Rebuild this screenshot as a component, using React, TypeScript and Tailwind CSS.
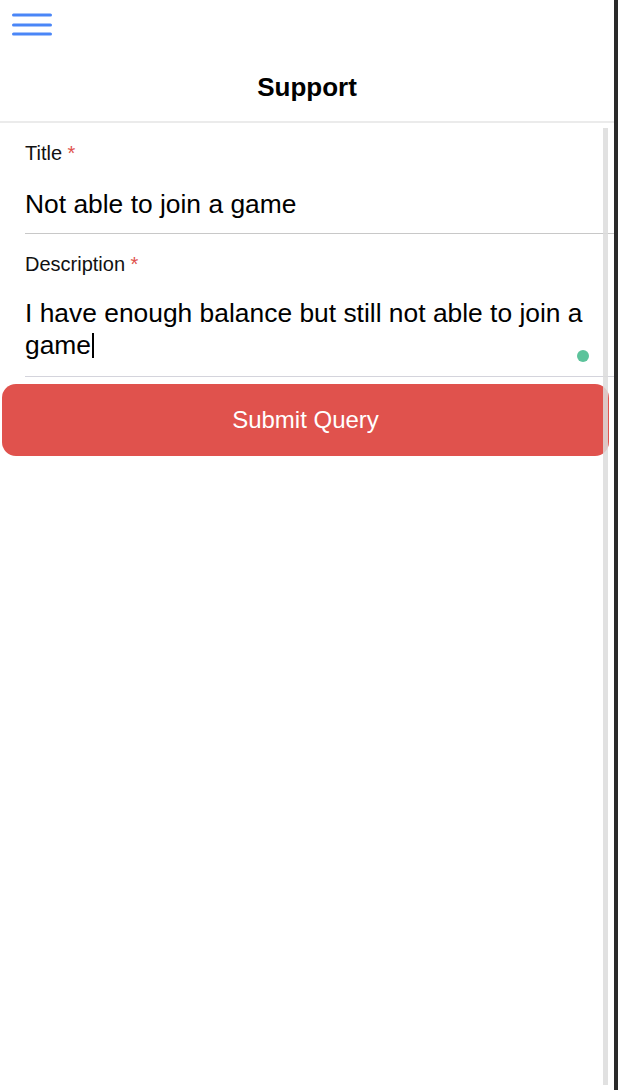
import React from 'react';

export default function App() {
  return (
    <div className="flex h-[1090px] w-[618px] bg-white font-['Liberation_Sans',Arial,sans-serif] text-black">
      <div className="relative flex w-[614px] flex-col">
        {/* header */}
        <header className="flex h-[123px] flex-col border-b-2 border-[#ebebeb]">
          <div className="pl-[12px] pt-[13px]">
            <svg width="40" height="24" viewBox="0 0 40 24" fill="none">
              <line x1="1.5" y1="2" x2="38.5" y2="2" stroke="#4a86f7" strokeWidth="3" strokeLinecap="round" />
              <line x1="1.5" y1="12" x2="38.5" y2="12" stroke="#4a86f7" strokeWidth="3" strokeLinecap="round" />
              <line x1="1.5" y1="21" x2="38.5" y2="21" stroke="#4a86f7" strokeWidth="3" strokeLinecap="round" />
            </svg>
          </div>
          <h1 className="mt-[34px] text-center text-[26px] leading-[32px] font-semibold">Support</h1>
        </header>

        {/* form */}
        <div className="flex flex-col pl-[25px]">
          <label className="mt-[18px] text-[20px] leading-[24px] text-[#111]">
            Title <span className="text-[#e0524d]">*</span>
          </label>
          <div className="mt-[23px] border-b border-[#c8c8c8] pb-[13px] text-[26.4px] leading-[32px]">
            Not able to join a game
          </div>

          <label className="mt-[18px] text-[20px] leading-[24px] text-[#111]">
            Description <span className="text-[#e0524d]">*</span>
          </label>
          <div className="relative mt-[22px] border-b border-[#d4d4dc] pb-[15px] pr-[20px] text-[26.4px] leading-[31px]">
            I have enough balance but still not able to join a game
            <span className="ml-[1px] inline-block h-[25px] w-[1.5px] translate-y-[4px] bg-black" />
            <span className="absolute right-[25px] top-[52px] h-[12px] w-[12px] rounded-full bg-[#5cc39b]" />
          </div>
        </div>

        <button className="ml-[2px] mt-[7px] h-[72px] w-[607px] rounded-[14px] bg-[#e0524d] text-[24px] text-white">
          Submit Query
        </button>

        {/* scrollbar overlay */}
        <div className="absolute left-[603px] top-[128px] h-[957px] w-[5px] bg-[#dcdcdc]/85" />
      </div>
      <div className="h-full w-[4px] bg-[#2a2a2a]" />
    </div>
  );
}
